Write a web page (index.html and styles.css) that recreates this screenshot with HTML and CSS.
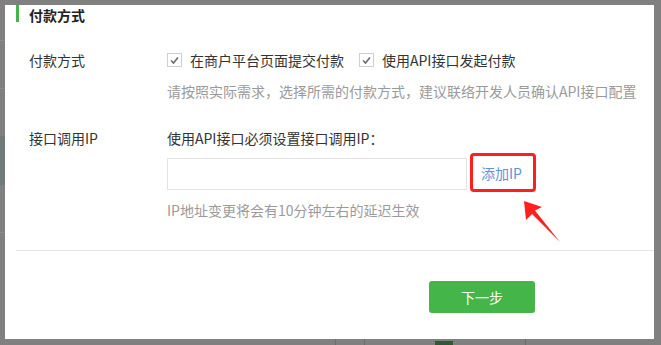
FILE: index.html
```html
<!DOCTYPE html>
<html lang="zh-CN">
<head>
<meta charset="utf-8">
<title>付款方式</title>
<link rel="stylesheet" href="styles.css">
</head>
<body>
<div class="backdrop">
  <span class="bd-line bd-l1"></span>
  <span class="bd-line bd-l2"></span>
  <span class="bd-line bd-l3"></span>
  <span class="bd-block"></span>
  <span class="bd-vline bd-v1"></span>
  <span class="bd-vline bd-v2"></span>
  <span class="bd-vline bd-v3"></span>
  <span class="bd-green"></span>
</div>
<div class="dialog">
  <div class="head"><span class="head-title">付款方式</span></div>

  <div class="row row-pay">
    <div class="label">付款方式</div>
    <div class="content">
      <div class="checks">
        <label class="check">
          <span class="box"><svg viewBox="0 0 15 14" width="15" height="14"><polyline points="4,7.5 6.5,10 11,4.5" fill="none" stroke="#6b6b6b" stroke-width="1.6"/></svg></span>
          <span class="check-text">在商户平台页面提交付款</span>
        </label>
        <label class="check">
          <span class="box"><svg viewBox="0 0 15 14" width="15" height="14"><polyline points="4,7.5 6.5,10 11,4.5" fill="none" stroke="#6b6b6b" stroke-width="1.6"/></svg></span>
          <span class="check-text">使用API接口发起付款</span>
        </label>
      </div>
      <div class="hint hint-pay">请按照实际需求，选择所需的付款方式，建议联络开发人员确认API接口配置</div>
    </div>
  </div>

  <div class="row row-ip">
    <div class="label">接口调用IP</div>
    <div class="content">
      <div class="ip-title">使用API接口必须设置接口调用IP：</div>
      <div class="ip-input-row">
        <input class="ip-input" type="text">
        <a class="add-ip">添加IP</a>
      </div>
      <div class="hint hint-ip">IP地址变更将会有10分钟左右的延迟生效</div>
    </div>
  </div>

  <div class="sep"></div>
  <div class="footer"><button class="next-btn">下一步</button></div>

  <svg class="arrow" viewBox="0 0 50 52" width="50" height="52"><polygon points="6,6 8,25 14,19 42,47 17,15.5 24,12" fill="#ff1f1f"/></svg>
</div>
</body>
</html>
```

FILE: styles.css
```css
* { box-sizing: border-box; }
html, body {
  margin: 0;
  padding: 0;
}
body {
  width: 661px;
  height: 345px;
  overflow: hidden;
  background: #808080;
  position: relative;
  font-family: "Microsoft YaHei", "Noto Sans CJK SC", "Liberation Sans", sans-serif;
  font-size: 14px;
  color: #333;
  padding: 5px 0 0 5px;
}
.backdrop { position: absolute; inset: 0; }
.bd-line { position: absolute; left: 0; width: 5px; height: 1px; background: #8c8c8c; }
.bd-l1 { top: 40px; }
.bd-l2 { top: 88px; }
.bd-l3 { top: 232px; }
.bd-block { position: absolute; left: 0; top: 136px; width: 5px; height: 49px; background: #6f7b7a; }
.bd-vline { position: absolute; top: 339px; width: 1px; height: 6px; background: #6c6c6c; }
.bd-v1 { left: 335px; }
.bd-v2 { left: 364px; }
.bd-v3 { left: 525px; }
.bd-green { position: absolute; left: 435px; top: 341px; width: 18px; height: 4px; background: #2f5a30; }

.dialog {
  position: relative;
  width: 649px;
  height: 334px;
  background: #fff;
}
.head {
  margin-left: 11px;
  height: 17px;
  border-left: 3px solid #44b549;
  padding-left: 10px;
  display: flex;
  align-items: center;
}
.head-title {
  font-weight: bold;
  font-size: 14px;
  line-height: 18px;
  color: #222;
  margin-top: 2px;
}
.row {
  display: flex;
  padding-left: 24px;
}
.row-pay { margin-top: 28px; }
.row-ip { margin-top: 27px; }
.label {
  width: 138px;
  line-height: 20px;
  color: #333;
}
.content {
  display: flex;
  flex-direction: column;
}
.checks {
  display: flex;
  align-items: center;
  height: 20px;
}
.check {
  display: flex;
  align-items: center;
  margin-right: 15px;
}
.box {
  width: 15px;
  height: 14px;
  border: 1px solid #cfcfcf;
  display: flex;
  align-items: center;
  justify-content: center;
  margin-right: 8px;
  overflow: hidden;
}
.box svg { flex: none; }
.check-text { line-height: 20px; color: #333; }
.hint {
  color: #9a9a9a;
  line-height: 20px;
}
.hint-pay { margin-top: 11px; }
.ip-title { line-height: 20px; color: #333; }
.ip-input-row {
  display: flex;
  align-items: center;
  margin-top: 6px;
  height: 39px;
}
.ip-input {
  width: 300px;
  height: 32px;
  border: 1px solid #e3e3e3;
  margin: 0 3px 0 0;
  padding: 0 8px;
  outline: none;
  font: inherit;
}
.add-ip {
  width: 66px;
  height: 39px;
  border: 3px solid #ff1f1f;
  border-radius: 4px;
  padding-left: 8px;
  display: flex;
  align-items: center;
  color: #5d92dc;
  line-height: 20px;
  margin-top: -2px;
}
.hint-ip { margin-top: 7px; }
.sep {
  margin: 30px 0 0 11px;
  height: 1px;
  background: #e6e6e6;
}
.footer {
  padding-left: 424px;
  margin-top: 30px;
}
.next-btn {
  width: 106px;
  height: 32px;
  background: #44b549;
  border: none;
  border-radius: 3px;
  color: #fff;
  font: inherit;
  font-size: 14px;
  padding: 0;
}
.arrow {
  position: absolute;
  left: 513px;
  top: 190px;
}
```
